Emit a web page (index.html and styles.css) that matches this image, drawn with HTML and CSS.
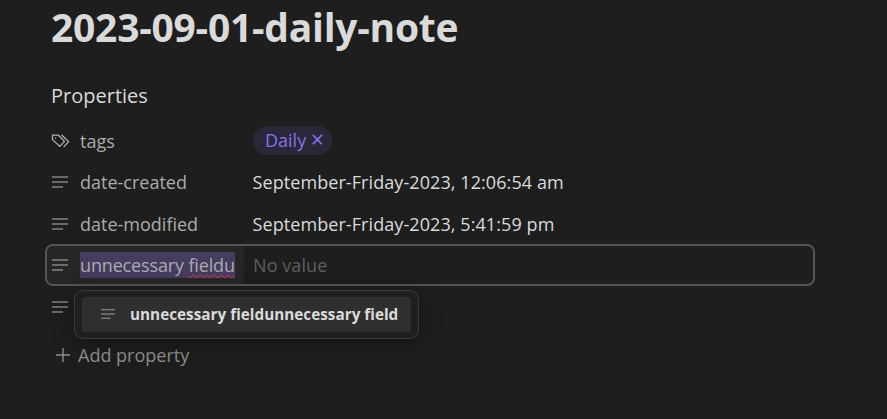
FILE: index.html
```html
<!DOCTYPE html>
<html lang="en">
<head>
  <meta charset="UTF-8">
  <title>2023-09-01-daily-note</title>
  <link rel="stylesheet" href="styles.css">
</head>
<body>
  <svg class="defs" width="0" height="0">
    <symbol id="lines" viewBox="0 0 18 14">
      <path d="M1 2h16M1 7h16M1 12h11" fill="none" stroke="currentColor" stroke-width="1.2"/>
    </symbol>
  </svg>

  <main class="note">
    <h1 class="title">2023-09-01-daily-note</h1>
    <h2 class="heading">Properties</h2>

    <div class="props">
      <div class="row">
        <div class="key">
          <svg class="icon tag-icon" viewBox="0 0 20 16"><path d="M1.5 2.2h6l6 6.2-4.8 5-7.2-6.8zM11 2.2l6.6 6.4-4.6 5M4.6 5v.1" fill="none" stroke="currentColor" stroke-width="1.3" stroke-linejoin="round" stroke-linecap="round"/></svg>
          <span>tags</span>
        </div>
        <div class="value"><span class="pill">Daily <span class="pill-x">×</span></span></div>
      </div>

      <div class="row">
        <div class="key"><svg class="icon"><use href="#lines"/></svg><span>date-created</span></div>
        <div class="value">September-Friday-2023, 12:06:54 am</div>
      </div>

      <div class="row">
        <div class="key"><svg class="icon"><use href="#lines"/></svg><span>date-modified</span></div>
        <div class="value">September-Friday-2023, 5:41:59 pm</div>
      </div>

      <div class="row row-focus">
        <div class="key"><svg class="icon"><use href="#lines"/></svg><span class="selected">unnecessary <span class="misspelled">fieldu</span></span></div>
        <div class="value empty">No value</div>
      </div>

      <div class="row row-hidden">
        <div class="key"><svg class="icon"><use href="#lines"/></svg></div>
        <div class="suggest">
          <div class="suggest-item">
            <svg class="icon icon-small"><use href="#lines"/></svg>
            <span>unnecessary fieldunnecessary field</span>
          </div>
        </div>
      </div>
    </div>

    <div class="add">
      <svg class="plus" viewBox="0 0 14 14"><path d="M7 0v14M0 7h14" fill="none" stroke="currentColor" stroke-width="1.4"/></svg>
      <span>Add property</span>
    </div>
  </main>
</body>
</html>
```

FILE: styles.css
```css
html, body {
  margin: 0;
  padding: 0;
  height: 419px;
  overflow: hidden;
}

body {
  background-color: #1e1e1e;
  color: #dadada;
  font-family: "Open Sans", "Noto Sans", sans-serif;
}

.defs {
  position: absolute;
}

.note {
  padding-left: 45px;
  width: 770px;
}

.title {
  margin: 0 0 0 6px;
  font-size: 39px;
  line-height: 54px;
  font-weight: 700;
  letter-spacing: -0.25px;
}

.heading {
  margin: 28px 0 0 6px;
  font-size: 20px;
  line-height: 28px;
  font-weight: 400;
}

.props {
  margin-top: 10px;
}

.row {
  display: flex;
  height: 41.5px;
  align-items: center;
  font-size: 18px;
  box-sizing: border-box;
}

.key {
  display: flex;
  align-items: center;
  width: 199px;
  height: 100%;
  padding-left: 6px;
  box-sizing: border-box;
  color: #ababab;
}

.icon {
  width: 18px;
  height: 14px;
  margin-right: 11px;
  flex-shrink: 0;
  color: #b3b3b3;
}

.tag-icon {
  width: 20px;
  height: 16px;
  margin-right: 9px;
  margin-left: 0;
}

.value {
  padding-left: 8.5px;
  flex: 1;
  letter-spacing: 0.08px;
}

.pill {
  display: inline-block;
  padding: 0 8px 0 12.5px;
  height: 29px;
  line-height: 28px;
  border-radius: 15px;
  background-color: #2a2838;
  color: #8a70e8;
  letter-spacing: 0;
}

.pill-x {
  font-size: 23px;
  line-height: 20px;
  vertical-align: -1px;
}

.row-focus {
  height: 42.5px;
  margin-top: -1px;
  border: 2px solid #555555;
  border-radius: 8px;
  overflow: hidden;
}

.row-focus .key {
  width: 197px;
  padding-left: 4px;
  background-color: #262626;
}

.row-focus .value {
  align-self: stretch;
  display: flex;
  align-items: center;
  padding-left: 9px;
}

.selected {
  background-color: #453c60;
  line-height: 26px;
  letter-spacing: -0.15px;
}

.misspelled {
  text-decoration: underline wavy #d93a4a;
  text-decoration-thickness: 1px;
  text-underline-offset: 2px;
}

.empty {
  color: #5f5f5f;
}

.row-hidden {
  position: relative;
  align-items: flex-start;
}

.row-hidden .key {
  height: 41px;
}

.suggest {
  position: absolute;
  left: 29px;
  top: 3.5px;
  padding: 6px 6.5px 6px 7px;
  background-color: #1f1f1f;
  border: 1px solid #3a3a3a;
  border-radius: 9px;
  box-shadow: 0 4px 22px rgba(0, 0, 0, 0.35);
}

.suggest-item {
  display: flex;
  align-items: center;
  height: 35px;
  padding: 0 13px 0 18px;
  border-radius: 4px;
  background-color: #2f2f2f;
  font-size: 15.3px;
  font-weight: 700;
  white-space: nowrap;
}

.icon-small {
  width: 16px;
  height: 12px;
  margin-right: 14px;
  color: #999999;
}

.add {
  display: flex;
  align-items: center;
  margin: 14px 0 0 11px;
  font-size: 18px;
  line-height: 26px;
  color: #8f8f8f;
}

.plus {
  width: 14px;
  height: 14px;
  margin-right: 8px;
}
```
